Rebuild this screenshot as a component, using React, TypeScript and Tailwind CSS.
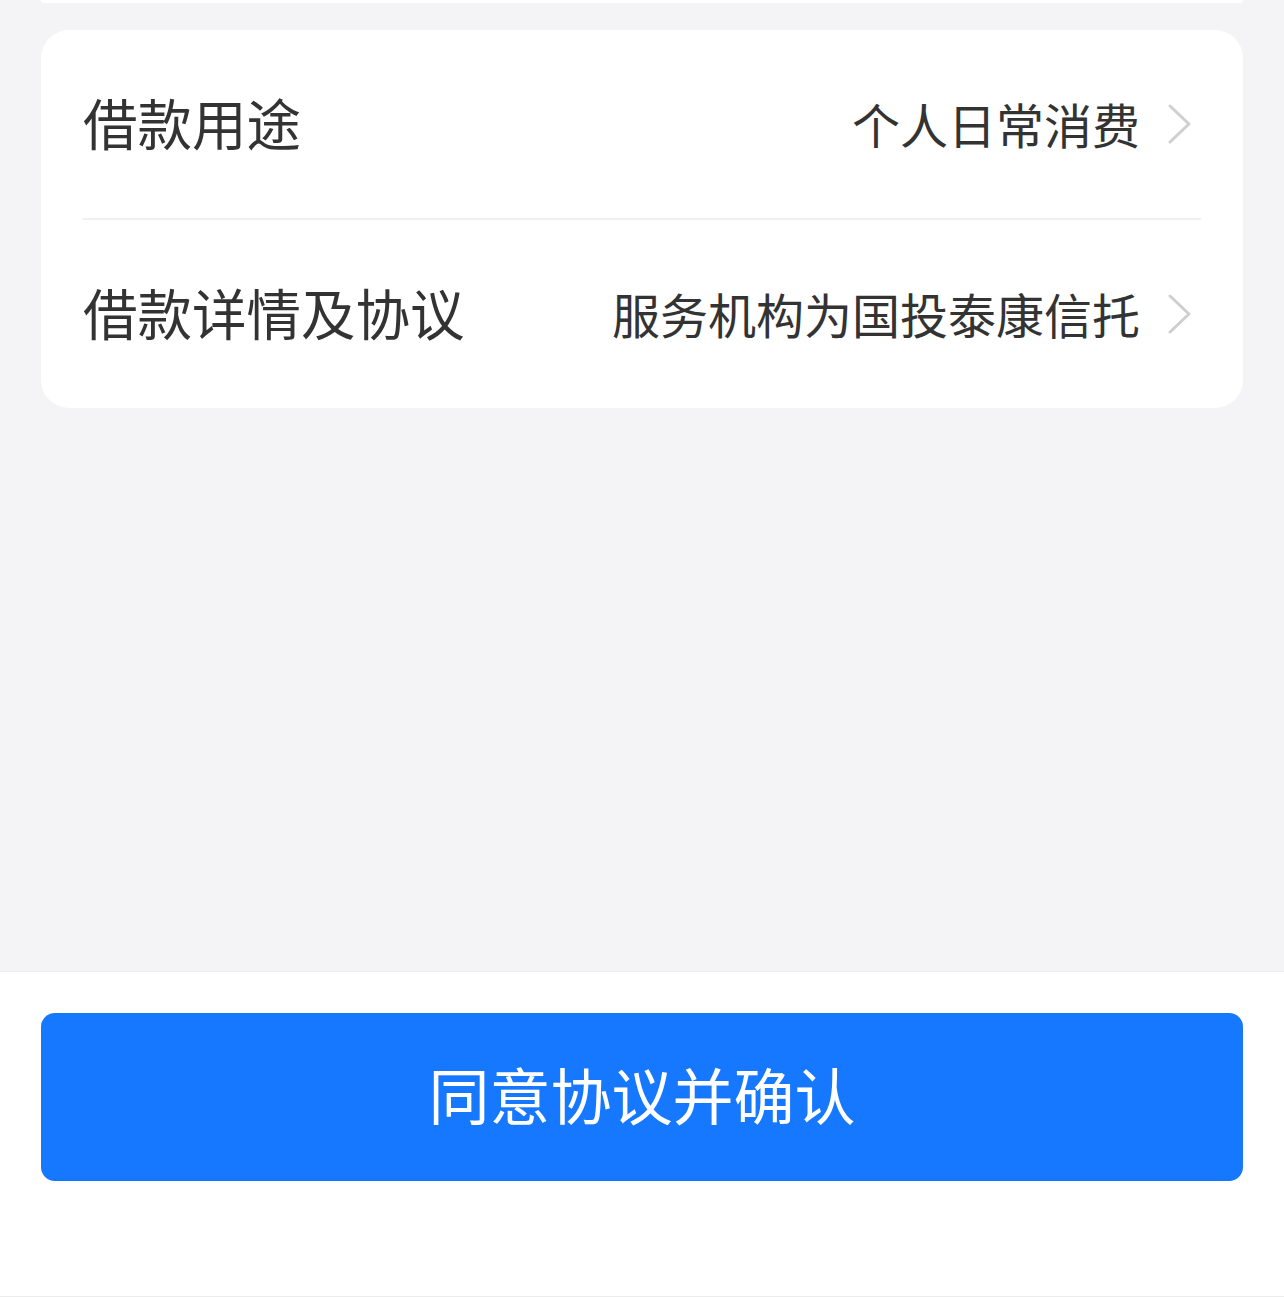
const rows = [
  { label: "借款用途", value: "个人日常消费" },
  { label: "借款详情及协议", value: "服务机构为国投泰康信托" },
];

function Chevron() {
  return (
    <svg width="42" height="42" viewBox="0 0 42 42" fill="none" stroke="#cfcfcf" strokeWidth="3" strokeLinecap="round" strokeLinejoin="round" className="shrink-0">
      <path d="M11 3l19 18-19 18" />
    </svg>
  );
}

export default function App() {
  return (
    <div
      className="h-[1297px] w-full flex flex-col bg-[#f4f4f6] text-[#333]"
      style={{ fontFamily: '"Noto Sans CJK SC", "Noto Sans", sans-serif' }}
    >
      {/* ─── Previous card (cut off) ─────────────────────────── */}
      <div className="mx-[41px] h-[3px] bg-white rounded-b-[3px]" />

      {/* ─── Info card ───────────────────────────────────────── */}
      <div className="mx-[41px] mt-[27px] bg-white rounded-[28px]">
        {rows.map((r, i) => (
          <div key={r.label}>
            {i > 0 && <div className="mx-[42px] h-[2px] bg-[#f0f0f0]" />}
            <div className="h-[188px] px-[42px] flex items-center">
              <span className="text-[54.5px] leading-none flex-1 pb-[4px]">{r.label}</span>
              <span className="text-[48px] leading-none mr-[19px] pb-[3px]">{r.value}</span>
              <Chevron />
            </div>
          </div>
        ))}
      </div>

      <div className="flex-1" />

      {/* ─── Footer ──────────────────────────────────────────── */}
      <div className="h-[326px] bg-white border-t border-[#ececec] border-b pt-[41px] px-[41px]">
        <button className="w-full h-[168px] rounded-[14px] bg-[#1677ff] text-white text-[61px] leading-none flex items-center justify-center pb-[8px]">
          同意协议并确认
        </button>
      </div>
    </div>
  );
}
